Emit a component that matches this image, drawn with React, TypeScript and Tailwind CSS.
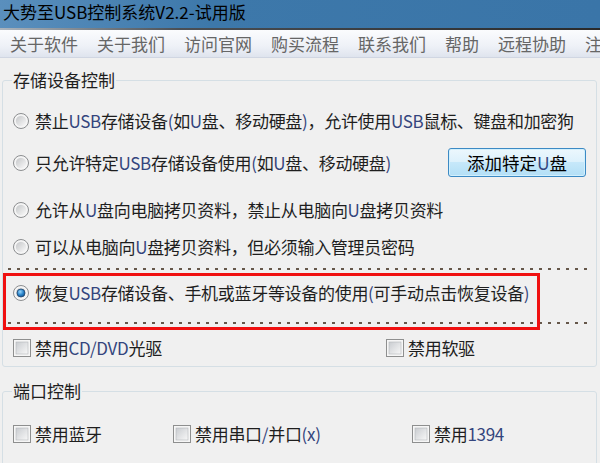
import React from "react";

const menuItems = ["关于软件", "关于我们", "访问官网", "购买流程", "联系我们", "帮助", "远程协助", "注"];

// latin runs in the old ClearType shot read as a dark blue
function T({ s }: { s: string }) {
  const parts = s.split(/([A-Za-z0-9()/.\-]+)/);
  return (
    <>
      {parts.map((p, i) =>
        i % 2 ? (
          <span key={i} className="text-[#34457d]">
            {p}
          </span>
        ) : (
          p
        )
      )}
    </>
  );
}

function Radio({ checked }: { checked?: boolean }) {
  return (
    <svg width="16" height="16" viewBox="0 0 16 16" className="shrink-0">
      <defs>
        <linearGradient id="rd-in" x1="0" y1="0" x2="1" y2="1">
          <stop offset="0" stopColor="#c4c6c8" />
          <stop offset="1" stopColor="#fafafa" />
        </linearGradient>
        <radialGradient id="rd-dot" cx="0.4" cy="0.35" r="0.7">
          <stop offset="0" stopColor="#9ad6fb" />
          <stop offset="0.55" stopColor="#2b86cc" />
          <stop offset="1" stopColor="#0f4f8a" />
        </radialGradient>
      </defs>
      <circle cx="8" cy="8" r="7.5" fill="#f5f5f5" stroke="#8c8e90" />
      <circle cx="8" cy="8" r="5.2" fill="url(#rd-in)" />
      {checked && <circle cx="8" cy="8" r="4" fill="url(#rd-dot)" stroke="#24476f" strokeWidth="0.8" />}
    </svg>
  );
}

function Check() {
  return (
    <svg width="18" height="18" viewBox="0 0 18 18" className="shrink-0">
      <defs>
        <linearGradient id="cb-in" x1="0" y1="0" x2="1" y2="1">
          <stop offset="0" stopColor="#c9ccd0" />
          <stop offset="1" stopColor="#f8f8f8" />
        </linearGradient>
      </defs>
      <rect x="0.5" y="0.5" width="17" height="17" fill="#f6f6f6" stroke="#8e8f8f" />
      <rect x="3" y="3" width="12" height="12" fill="url(#cb-in)" stroke="#b4b7bb" strokeWidth="0.6" />
    </svg>
  );
}

function RadioRow({ text, checked, className = "" }: { text: string; checked?: boolean; className?: string }) {
  return (
    <div className={`flex items-center h-[24px] pl-[10px] gap-[6px] ${className}`}>
      <Radio checked={checked} />
      <span className="whitespace-nowrap text-[17px] leading-[24px] tracking-[-0.3px]">
        <T s={text} />
      </span>
    </div>
  );
}

function CheckItem({ text, className = "" }: { text: string; className?: string }) {
  return (
    <div className={`flex items-center gap-[4px] shrink-0 ${className}`}>
      <Check />
      <span className="whitespace-nowrap text-[17px] leading-[24px] tracking-[-0.3px]">
        <T s={text} />
      </span>
    </div>
  );
}

function Dashes() {
  return (
    <div className="h-[2px] ml-[5px] mr-[6px] bg-[repeating-linear-gradient(90deg,#65574a_0px,#65574a_3px,transparent_3px,transparent_9px)]" />
  );
}

export default function App() {
  return (
    <div className="w-[600px] h-[463px] overflow-hidden bg-[#f0f0f0] text-[#1e1e1e] font-['Noto_Sans_CJK_SC',sans-serif]">
      <div className="h-[28px] pl-[3px] text-[17px] leading-[24px] text-black whitespace-nowrap bg-[linear-gradient(90deg,#5a8fbd_0%,#3d78aa_35%,#3a75a8_100%)]">
        大势至USB控制系统V2.2-试用版
      </div>
      <div className="h-[2px] bg-[linear-gradient(90deg,#aab4be,#4a4f55_30%,#2a2a2a)]" />

      <div className="h-[28px] flex items-center gap-[19px] pl-[10px] overflow-hidden border-b border-[#d0d6e2] bg-[linear-gradient(#fbfcfe,#eef1f7_60%,#dfe4ee)] text-[17px] leading-[24px] text-[#666]">
        {menuItems.map((m) => (
          <span key={m} className="shrink-0 whitespace-nowrap">
            {m}
          </span>
        ))}
      </div>

      <div className="pl-[2px] pr-[3px] pt-[12px]">
        <fieldset className="border border-[#d5dfe5] rounded-[3px]">
          <legend className="ml-[9px] px-[1px] text-[17px] leading-[20px]">存储设备控制</legend>
          <div className="pt-[19px] pb-[6px]">
            <RadioRow text="禁止USB存储设备(如U盘、移动硬盘)，允许使用USB鼠标、键盘和加密狗" />

            <div className="flex items-center h-[29px] mt-[15px] pl-[10px] gap-[6px]">
              <Radio />
              <span className="whitespace-nowrap text-[17px] leading-[24px] tracking-[-0.3px]">
                <T s="只允许特定USB存储设备使用(如U盘、移动硬盘)" />
              </span>
              <button className="ml-auto mr-[10px] w-[138px] h-[29px] rounded-[3px] border border-[#3c8ac4] bg-[linear-gradient(#ecf7fd_0%,#dcf1fc_50%,#c6e8fa_50%,#b3dff6_100%)] shadow-[inset_0_0_0_1px_#d2f0fd] text-[17.5px] leading-[24px] text-black">
                <T s="添加特定U盘" />
              </button>
            </div>

            <RadioRow className="mt-[21px]" text="允许从U盘向电脑拷贝资料，禁止从电脑向U盘拷贝资料" />
            <RadioRow className="mt-[13px]" text="可以从电脑向U盘拷贝资料，但必须输入管理员密码" />

            <div className="relative mt-[9px]">
              <Dashes />
              <RadioRow className="mt-[11px]" checked text="恢复USB存储设备、手机或蓝牙等设备的使用(可手动点击恢复设备)" />
              <div className="mt-[17px]">
                <Dashes />
              </div>
              {/* annotation frame drawn over the dialog */}
              <div className="absolute left-0 top-[5px] w-[537px] h-[57px] border-[3px] border-[#f01010]" />
            </div>

            <div className="flex items-center h-[24px] mt-[12px] pl-[10px]">
              <CheckItem className="w-[373px]" text="禁用CD/DVD光驱" />
              <CheckItem text="禁用软驱" />
            </div>
          </div>
        </fieldset>

        <fieldset className="mt-[14px] border border-[#d5dfe5] rounded-[3px]">
          <legend className="ml-[9px] px-[1px] text-[17px] leading-[20px]">端口控制</legend>
          <div className="flex items-center h-[24px] mt-[21px] mb-[40px] pl-[10px]">
            <CheckItem className="w-[160px]" text="禁用蓝牙" />
            <CheckItem className="w-[239px]" text="禁用串口/并口(x)" />
            <CheckItem text="禁用1394" />
          </div>
        </fieldset>
      </div>
    </div>
  );
}
